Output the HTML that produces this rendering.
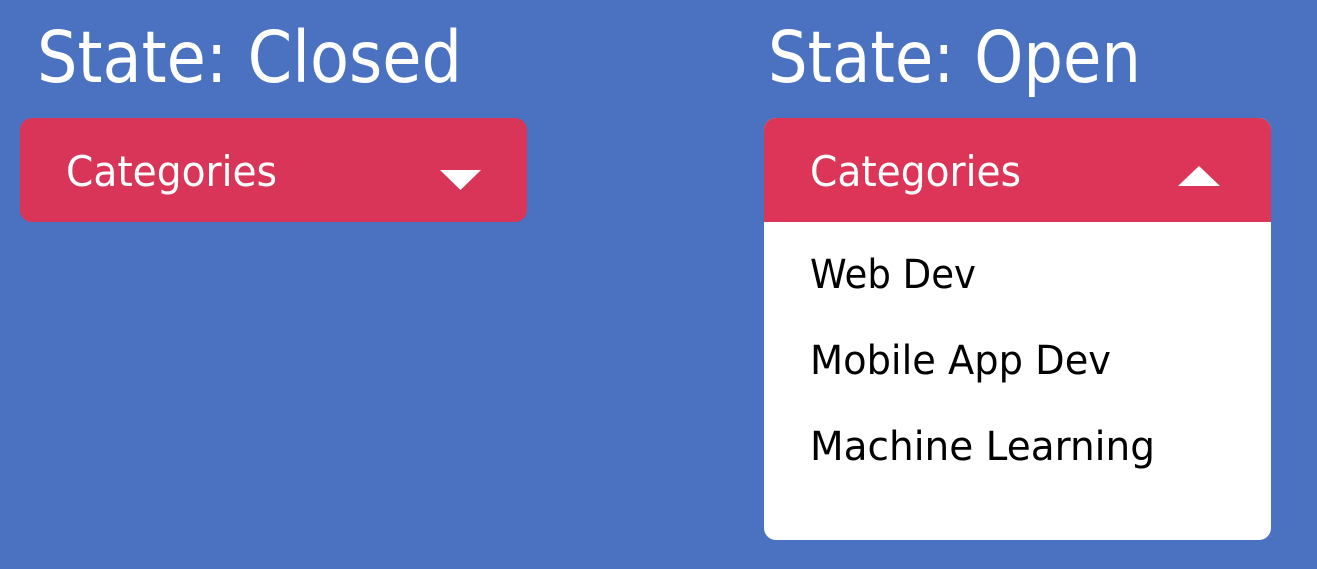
<!DOCTYPE html>
<html><head><meta charset="utf-8"><style>
html,body{margin:0;padding:0;background:#4a72c0;width:1317px;height:569px;overflow:hidden}
svg{display:block}
text{font-family:"DejaVu Sans","Liberation Sans",sans-serif}
</style></head><body>
<svg width="1317" height="569" viewBox="0 0 1317 569">
<rect width="1317" height="569" fill="#4a72c0"/>
<text x="37" y="82" font-size="71" fill="#fff" textLength="425" lengthAdjust="spacingAndGlyphs">State: Closed</text>
<text x="768" y="82" font-size="71" fill="#fff" textLength="373" lengthAdjust="spacingAndGlyphs">State: Open</text>
<rect x="20" y="118" width="507" height="104" rx="12" fill="#d93558"/>
<text x="66" y="186" font-size="42" fill="#fff" textLength="211" lengthAdjust="spacingAndGlyphs">Categories</text>
<polygon points="440,170 481,170 460.5,190" fill="#fff"/>
<rect x="764" y="118" width="507" height="422" rx="12" fill="#fff"/>
<path d="M764,222 V130 A12,12 0 0 1 776,118 H1259 A12,12 0 0 1 1271,130 V222 Z" fill="#dc3558"/>
<text x="810" y="186" font-size="42" fill="#fff" textLength="211" lengthAdjust="spacingAndGlyphs">Categories</text>
<polygon points="1178,186 1220,186 1199,166" fill="#fff"/>
<text x="810" y="288" font-size="40" fill="#000" textLength="166" lengthAdjust="spacingAndGlyphs">Web Dev</text>
<text x="810" y="374" font-size="40" fill="#000" textLength="301" lengthAdjust="spacingAndGlyphs">Mobile App Dev</text>
<text x="810" y="460" font-size="40" fill="#000" textLength="345" lengthAdjust="spacingAndGlyphs">Machine Learning</text>
</svg>
</body></html>
